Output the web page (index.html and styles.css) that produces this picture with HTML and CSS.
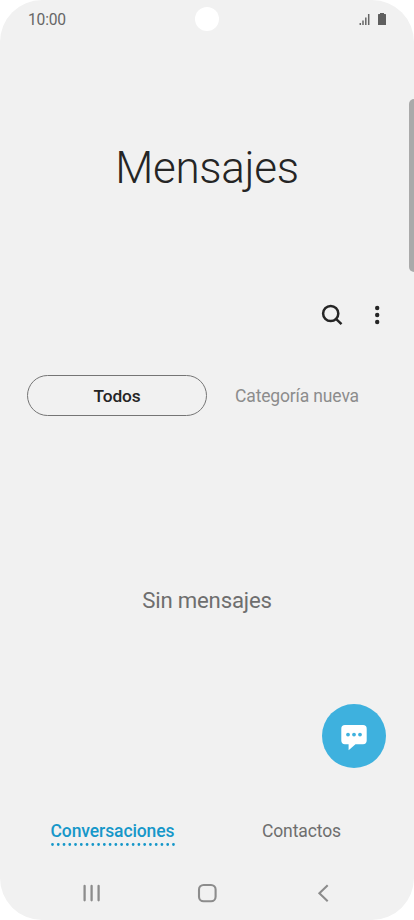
FILE: index.html
```
<!DOCTYPE html>
<html lang="es">
<head>
    <meta charset="UTF-8">
    <meta name="viewport" content="width=device-width, initial-scale=1.0">
    <title>Mensajes</title>
    <link rel="stylesheet" href="styles.css">
</head>
<body>
    <div class="screen">
        <header class="status-bar">
            <span class="clock">10:00</span>
            <span class="camera"></span>
            <div class="status-icons">
                <svg class="signal" width="12" height="12" viewBox="0 0 12 12">
                    <path d="M1.300 10V12M4 7.500V12M6.800 4.500V12M9.700 1V12" stroke="#666" stroke-width="1.5"/>
                </svg>
                <svg class="battery" width="8" height="12" viewBox="0 0 8 12">
                    <path d="M2 0h4v1h1.400q.6 0 .6.6V12H0V1.600q0-.6.6-.6H2z" fill="#5f5f5f"/>
                </svg>
            </div>
        </header>

        <main class="content">
            <h1 class="title">Mensajes</h1>

            <div class="toolbar">
                <button class="icon-button" aria-label="Buscar">
                    <svg width="22" height="22" viewBox="0 0 22 22" fill="none" stroke="#252525" stroke-width="2.5">
                        <circle cx="9.700" cy="9.500" r="7.600"/>
                        <path d="M15 14.900l5.500 5.200"/>
                    </svg>
                </button>
                <button class="icon-button" aria-label="Más opciones">
                    <svg width="6" height="22" viewBox="0 0 6 22" fill="#252525">
                        <circle cx="3.200" cy="4" r="2.200"/>
                        <circle cx="3.200" cy="11" r="2.200"/>
                        <circle cx="3.200" cy="18" r="2.200"/>
                    </svg>
                </button>
            </div>

            <div class="categories">
                <button class="category active">Todos</button>
                <button class="category">Categoría nueva</button>
            </div>

            <p class="empty">Sin mensajes</p>

            <button class="compose" aria-label="Mensaje nuevo">
                <svg width="26" height="26" viewBox="0 0 26 26">
                    <path d="M4 0h18q3.700 0 3.700 3.700v11.800q0 3.700-3.700 3.700h-7.500L7.600 25.200v-6H4q-3.700 0-3.700-3.700V3.700Q.3 0 4 0z" fill="#fff"/>
                    <g fill="#3eb1de">
                        <circle cx="7" cy="9.600" r="1.900"/>
                        <circle cx="13" cy="9.600" r="1.900"/>
                        <circle cx="19" cy="9.600" r="1.900"/>
                    </g>
                </svg>
            </button>
        </main>

        <nav class="tabs">
            <div class="tab selected">
                <span>Conversaciones</span>
                <svg class="dots" width="124" height="4" viewBox="0 0 124 4">
                    <path d="M1.500 1.500H122.700" stroke="#1697c9" stroke-width="2.800" stroke-linecap="round" stroke-dasharray="0 5.760"/>
                </svg>
            </div>
            <div class="tab">
                <span>Contactos</span>
            </div>
        </nav>

        <footer class="nav-bar">
            <svg width="20" height="20" viewBox="0 0 20 20" fill="none" stroke="#8c8c8c" stroke-width="2.300" stroke-linecap="round">
                <path d="M2.600 3v14.300M9.600 3v14.300M16.600 3v14.300"/>
            </svg>
            <svg width="20" height="20" viewBox="0 0 20 20" fill="none" stroke="#8c8c8c" stroke-width="2.100">
                <rect x="2" y="2" width="16.600" height="16.300" rx="4.600"/>
            </svg>
            <svg width="20" height="20" viewBox="0 0 20 20" fill="none" stroke="#8c8c8c" stroke-width="2.100">
                <path d="M15.700 2.200L7.400 10.200l8.300 8"/>
            </svg>
        </footer>

        <div class="edge-handle"></div>
    </div>
</body>
</html>
```

FILE: styles.css
```
* {
    box-sizing: border-box;
}
body {
    margin: 0;
    background: #fff;
    font-family: Roboto, sans-serif;
}
button {
    padding: 0;
    border: none;
    background: none;
    font-family: inherit;
}
svg {
    display: block;
}
.screen {
    position: relative;
    display: flex;
    flex-direction: column;
    width: 414px;
    height: 920px;
    background: #f1f1f1;
    border-radius: 42px;
    overflow: hidden;
}
.status-bar {
    display: grid;
    grid-template-columns: 1fr 24px 1fr;
    align-items: center;
    height: 38px;
    padding: 0 28px;
}
.clock {
    font-size: 15.6px;
    line-height: 18px;
    letter-spacing: -0.2px;
    color: #666;
    padding-top: 1px;
}
.camera {
    width: 24px;
    height: 24px;
    border-radius: 50%;
    background: #fff;
}
.status-icons {
    display: flex;
    justify-content: flex-end;
    gap: 7px;
}
.content {
    display: flex;
    flex-direction: column;
    flex: 1;
}
.title {
    margin: 104px 0 0;
    font-size: 44px;
    font-weight: 300;
    line-height: 52px;
    letter-spacing: -0.3px;
    text-align: center;
    color: #252525;
}
.toolbar {
    display: flex;
    justify-content: flex-end;
    gap: 31px;
    margin-top: 110px;
    padding-right: 34px;
}
.categories {
    display: flex;
    margin-top: 49px;
    padding: 0 27px;
}
.category {
    width: 180px;
    height: 41px;
    font-size: 17.5px;
    letter-spacing: -0.15px;
    color: #8c8c8c;
}
.category.active {
    border: 1px solid #757575;
    border-radius: 21px;
    font-size: 17.3px;
    font-weight: 500;
    color: #252525;
}
.empty {
    margin: 170px 0 0;
    font-size: 22.2px;
    line-height: 28px;
    letter-spacing: -0.2px;
    text-align: center;
    color: #6e6e6e;
}
.compose {
    display: flex;
    align-items: center;
    justify-content: center;
    align-self: flex-end;
    width: 64px;
    height: 64px;
    margin: 90px 28px 0 0;
    padding: 3px 0 0;
    border-radius: 50%;
    background: #3eb1de;
}
.tabs {
    display: flex;
    height: 63px;
    padding: 0 18px;
}
.tab {
    display: flex;
    flex-direction: column;
    align-items: center;
    width: 189px;
    font-size: 17.5px;
    line-height: 22px;
    letter-spacing: -0.1px;
    color: #6e6e6e;
}
.tab.selected {
    font-weight: 500;
    color: #1697c9;
}
.dots {
    margin-top: 1px;
}
.nav-bar {
    display: flex;
    justify-content: space-between;
    height: 37px;
    padding: 0 82px;
}
/* side panel handle lies over the right edge */
.edge-handle {
    position: absolute;
    top: 99px;
    right: 0;
    width: 5px;
    height: 173px;
    border-radius: 5px 0 0 5px;
    background: #aaa;
}
```
